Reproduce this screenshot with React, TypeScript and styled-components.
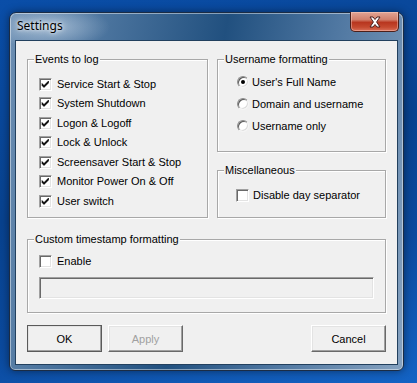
import React, { ReactElement } from 'react';
import styled, { createGlobalStyle } from 'styled-components';

const GlobalStyle = createGlobalStyle`
  html, body {
    margin: 0;
    padding: 0;
    width: 417px;
    height: 383px;
    overflow: hidden;
  }
  body {
    font-family: "Liberation Sans", Arial, sans-serif;
    font-size: 11px;
    color: #000000;
  }
`;

const EVENTS = [
  'Service Start & Stop',
  'System Shutdown',
  'Logon & Logoff',
  'Lock & Unlock',
  'Screensaver Start & Stop',
  'Monitor Power On & Off',
  'User switch',
];

const USERNAME_MODES = ['User\'s Full Name', 'Domain and username', 'Username only'];

function CheckMark(): ReactElement {
  return (
    <svg width='9' height='9' viewBox='0 0 9 9'>
      <path d='M1 3.5 L3 5.5 L7.5 1 L7.5 3 L3 7.5 L1 5.5 Z' fill='#000000' stroke='#000000' strokeWidth='0.6' />
    </svg>
  );
}

function CloseGlyph(): ReactElement {
  return (
    <svg width='14' height='12' viewBox='0 0 14 12'>
      <path
        d='M2 1 L5 1 L7 3.5 L9 1 L12 1 L8.6 6 L12 11 L9 11 L7 8.5 L5 11 L2 11 L5.4 6 Z'
        fill='#ffffff'
        stroke='#4a2020'
        strokeWidth='1'
        strokeLinejoin='round'
      />
    </svg>
  );
}

type CheckProps = { checked?: boolean, label: string, gap?: number };

function Check({ checked, label, gap = 5 }: CheckProps): ReactElement {
  return (
    <CheckRow>
      <CheckBox>{checked && <CheckMark />}</CheckBox>
      <Label $gap={gap}>{label}</Label>
    </CheckRow>
  );
}

type RadioProps = { selected?: boolean, label: string };

function Radio({ selected, label }: RadioProps): ReactElement {
  return (
    <RadioRow>
      <RadioCircle>{selected && <RadioDot />}</RadioCircle>
      <Label $gap={3}>{label}</Label>
    </RadioRow>
  );
}

function App(): ReactElement {
  return (
    <Desktop>
      <GlobalStyle />
      <Window>
        <TitleBar>
          <Title>Settings</Title>
          <CloseButton><CloseGlyph /></CloseButton>
        </TitleBar>
        <Client>
          <TopSection>
            <Group $height={159} $padTop={14.5} $padLeft={11}>
              <Legend>Events to log</Legend>
              {EVENTS.map((e) => <Check key={e} checked label={e} />)}
            </Group>
            <RightColumn>
              <Group $height={93} $padTop={11} $padLeft={19}>
                <Legend>Username formatting</Legend>
                {USERNAME_MODES.map((m, i) => <Radio key={m} selected={i === 0} label={m} />)}
              </Group>
              <Group $height={48} $padTop={14.5} $padLeft={18}>
                <Legend>Miscellaneous</Legend>
                <Check label='Disable day separator' gap={4} />
              </Group>
            </RightColumn>
          </TopSection>
          <Group $height={74} $padTop={11.5} $padLeft={11}>
            <Legend>Custom timestamp formatting</Legend>
            <Check label='Enable' />
            <TextField disabled />
          </Group>
          <ButtonBar>
            <ButtonPair>
              <Button $default>OK</Button>
              <Button disabled>Apply</Button>
            </ButtonPair>
            <Button>Cancel</Button>
          </ButtonBar>
        </Client>
      </Window>
    </Desktop>
  );
}

export default App;

const Desktop = styled.div`
  width: 417px;
  height: 383px;
  box-sizing: border-box;
  padding: 12px 13px 12px 9px;
  background: linear-gradient(165deg, #0a4ea8 0%, #08428f 45%, #0b4a9e 70%, #1463c4 100%);
`;

const Window = styled.div`
  width: 395px;
  height: 359px;
  box-sizing: border-box;
  display: flex;
  flex-direction: column;
  padding: 0 5px 5px 5px;
  border: 1px solid #1b2c44;
  border-radius: 7px 7px 6px 6px;
  background:
    radial-gradient(ellipse 60px 22px at 40px 14px, rgba(220, 232, 244, 0.55), rgba(220, 232, 244, 0) 100%),
    linear-gradient(100deg, #6d8fb3 0%, #4a739d 22%, #21507f 48%, #4f77a1 72%, #86a2c0 100%);
  box-shadow: inset 0 0 0 1px rgba(255, 255, 255, 0.45), 0 0 8px rgba(0, 0, 0, 0.45);
`;

const TitleBar = styled.div`
  height: 27px;
  display: flex;
  align-items: flex-start;
  justify-content: space-between;
`;

const Title = styled.div`
  font-family: "Noto Sans", "Open Sans", sans-serif;
  font-size: 12px;
  line-height: 16px;
  margin-top: 5px;
  padding-left: 2px;
  color: #000000;
  text-shadow: 0 0 6px #ffffff, 0 0 3px rgba(255, 255, 255, 0.8);
`;

const CloseButton = styled.div`
  width: 49px;
  height: 20px;
  box-sizing: border-box;
  margin-top: -1px;
  margin-right: -1px;
  display: flex;
  align-items: center;
  justify-content: center;
  border: 1px solid #4b1f1a;
  border-top: none;
  border-radius: 0 0 5px 5px;
  background: linear-gradient(180deg, #e2a595 0%, #d2806c 40%, #b8361f 55%, #c54a30 80%, #d9705a 100%);
  box-shadow: inset 0 0 0 1px rgba(255, 220, 210, 0.4);
`;

const Client = styled.div`
  flex: 1;
  box-sizing: border-box;
  display: flex;
  flex-direction: column;
  padding: 18px 11px 12px 11px;
  background: #f0f0f0;
  border: 1px solid #22405e;
`;

const TopSection = styled.div`
  display: grid;
  grid-template-columns: 181px 169px;
  column-gap: 9px;
  height: 159px;
  margin-bottom: 21px;
`;

const RightColumn = styled.div`
  display: flex;
  flex-direction: column;
  justify-content: space-between;
`;

const Group = styled.div<{ $height: number, $padTop: number, $padLeft: number }>`
  position: relative;
  box-sizing: border-box;
  flex: none;
  height: ${(p) => p.$height}px;
  padding: ${(p) => p.$padTop}px 11px 0 ${(p) => p.$padLeft}px;
  border: 1px solid #a8a8a8;
  box-shadow: inset 1px 1px 0 #ffffff, 1px 1px 0 #ffffff;
`;

const Legend = styled.span`
  position: absolute;
  top: -7px;
  left: 6px;
  padding: 0 1px 0 1px;
  line-height: 13px;
  background: #f0f0f0;
`;

const CheckRow = styled.div`
  height: 19.5px;
  display: flex;
  align-items: center;
`;

const RadioRow = styled.div`
  height: 22px;
  display: flex;
  align-items: center;
`;

const Label = styled.span<{ $gap: number }>`
  margin-left: ${(p) => p.$gap}px;
  line-height: 13px;
  white-space: nowrap;
`;

const CheckBox = styled.div`
  width: 13px;
  height: 13px;
  box-sizing: border-box;
  flex: none;
  display: flex;
  align-items: center;
  justify-content: center;
  background: #ffffff;
  border: 1px solid;
  border-color: #a0a0a0 #ffffff #ffffff #a0a0a0;
  box-shadow: inset 1px 1px 0 #696969, inset -1px -1px 0 #e3e3e3;
`;

const RadioCircle = styled.div`
  width: 12px;
  height: 12px;
  box-sizing: border-box;
  flex: none;
  display: flex;
  align-items: center;
  justify-content: center;
  border-radius: 50%;
  background: #ffffff;
  border: 1px solid;
  border-color: #8c8c8c #f4f4f4 #f4f4f4 #8c8c8c;
  box-shadow: inset 1px 1px 0 #5a5a5a, inset -1px -1px 0 #dcdcdc;
`;

const RadioDot = styled.div`
  width: 4px;
  height: 4px;
  border-radius: 50%;
  background: #000000;
`;

const TextField = styled.input`
  display: block;
  box-sizing: border-box;
  width: 335px;
  height: 22px;
  margin: 5.5px 0 0 0;
  padding: 0;
  background: #f0f0f0;
  border: 1px solid;
  border-color: #a0a0a0 #ffffff #ffffff #a0a0a0;
  box-shadow: inset 1px 1px 0 #696969, inset -1px -1px 0 #e3e3e3;
  outline: none;
`;

const ButtonBar = styled.div`
  display: flex;
  justify-content: space-between;
  margin-top: 12px;
`;

const ButtonPair = styled.div`
  display: flex;
  gap: 6px;
`;

const Button = styled.button<{ $default?: boolean }>`
  width: 75px;
  height: 27px;
  box-sizing: border-box;
  margin: 0;
  padding: 0;
  font-family: "Liberation Sans", Arial, sans-serif;
  font-size: 11px;
  color: #000000;
  background: #f0f0f0;
  border: 1px solid;
  border-color: #ffffff #696969 #696969 #ffffff;
  box-shadow: inset -1px -1px 0 #a0a0a0, inset 1px 1px 0 #e3e3e3;
  outline: ${(p) => p.$default ? '1px solid #5a5a5a' : 'none'};
  outline-offset: -1px;

  &:disabled {
    color: #a0a0a0;
  }
`;
